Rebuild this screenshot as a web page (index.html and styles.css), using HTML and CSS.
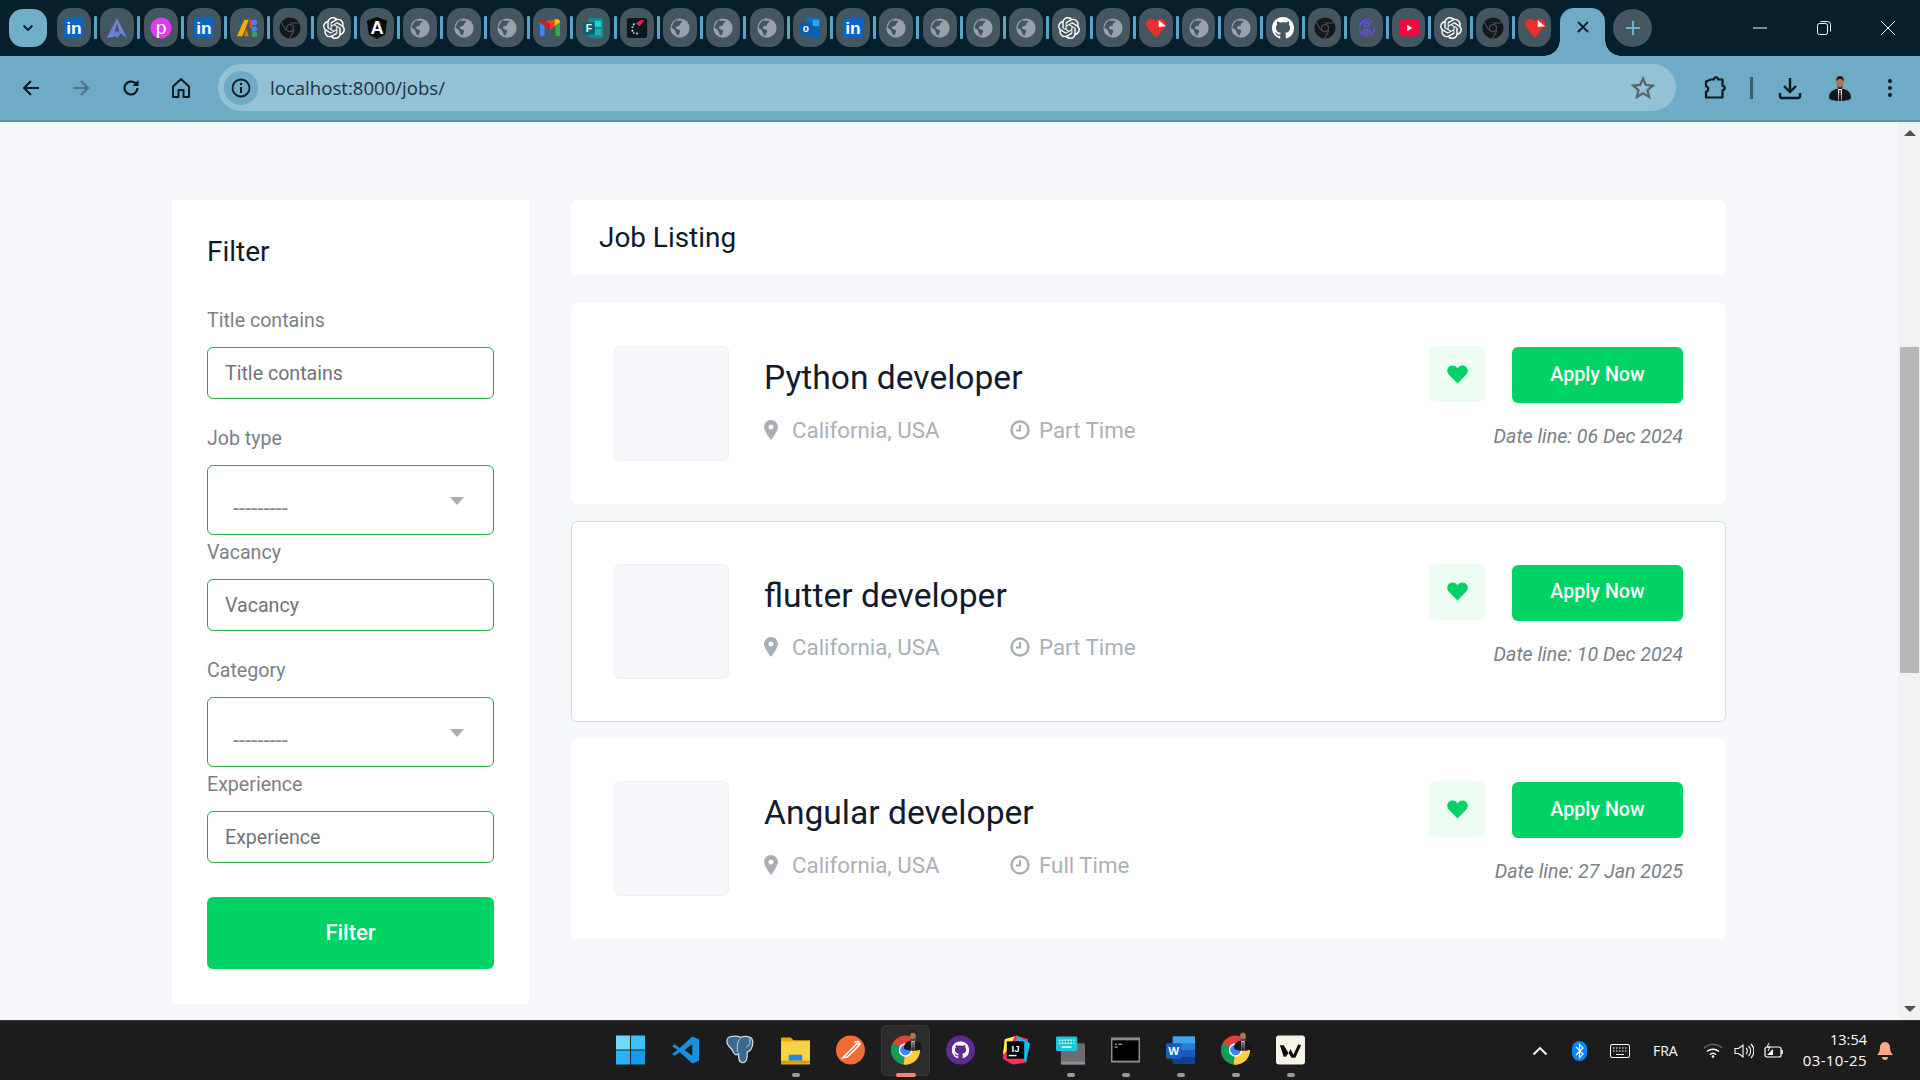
FILE: index.html
```html
<!DOCTYPE html>
<html lang="en">
<head>
<meta charset="utf-8">
<title>Job Listing</title>
<link rel="stylesheet" href="styles.css">
</head>
<body>
<svg class="defs" width="0" height="0" aria-hidden="true">
  <symbol id="g-globe" viewBox="0 0 24 24"><circle cx="12" cy="12" r="10.500" fill="#98a2a8"/><path d="M8 3.500c2 1 5 .5 7 .5-1 2-3 2.500-3 4.500 0 1.500-4 1-4.500 3-.3 1.500 2 2 3.500 2.500 1.500.5 1.500 2 .5 3.500-1 1.500-1 2.500-1 3-3-1-3-4-4-6-1-2-4-2-4-3C4 8 5 5 8 3.500z" fill="#44565f"/></symbol>
  <symbol id="g-arch" viewBox="0 0 24 24"><path d="M12 1 23 23l-7-5-4 5-1-2-10 2z" fill="#6f83d6"/><path d="M12 7l-3 11 3-3 3 3z" fill="#44565f"/></symbol>
  <symbol id="g-ads" viewBox="0 0 24 24"><path d="M9 3h5L7 21H1z" fill="#f9ab00"/><path d="M15 3h3v9h-3z" fill="#ea4335"/><circle cx="20" cy="6" r="3" fill="#4285f4"/><circle cx="20" cy="13" r="3" fill="#4285f4"/><circle cx="20" cy="19" r="3" fill="#34a853"/><path d="M11 12l3 9h-5z" fill="#e37400"/></symbol>
  <symbol id="g-chrome" viewBox="0 0 24 24"><circle cx="12" cy="12" r="11.500" fill="#14181b"/><circle cx="12" cy="12" r="4.500" fill="#44565f"/><circle cx="12" cy="12" r="3.200" fill="#14181b"/><path d="M12 6.500h10M16.500 14.500l-5 9M7.500 14.500 2.500 6" stroke="#44565f" stroke-width="1.200" fill="none"/></symbol>
  <symbol id="g-gpt" viewBox="0 0 24 24"><path fill="#fff" d="M22.2819 9.8211a5.9847 5.9847 0 0 0-.5157-4.9108 6.0462 6.0462 0 0 0-6.5098-2.9A6.0651 6.0651 0 0 0 4.9807 4.1818a5.9847 5.9847 0 0 0-3.9977 2.9 6.0462 6.0462 0 0 0 .7427 7.0966 5.98 5.98 0 0 0 .511 4.9107 6.051 6.051 0 0 0 6.5146 2.9001A5.9847 5.9847 0 0 0 13.2599 24a6.0557 6.0557 0 0 0 5.7718-4.2058 5.9894 5.9894 0 0 0 3.9977-2.9001 6.0557 6.0557 0 0 0-.7475-7.0729zm-9.022 12.6081a4.4755 4.4755 0 0 1-2.8764-1.0408l.1419-.0804 4.7783-2.7582a.7948.7948 0 0 0 .3927-.6813v-6.7369l2.02 1.1686a.071.071 0 0 1 .038.052v5.5826a4.504 4.504 0 0 1-4.4945 4.4944zm-9.6607-4.1254a4.4708 4.4708 0 0 1-.5346-3.0137l.142.0852 4.783 2.7582a.7712.7712 0 0 0 .7806 0l5.8428-3.3685v2.3324a.0804.0804 0 0 1-.0332.0615L9.74 19.9502a4.4992 4.4992 0 0 1-6.1408-1.6464zM2.3408 7.8956a4.485 4.485 0 0 1 2.3655-1.9728V11.6a.7664.7664 0 0 0 .3879.6765l5.8144 3.3543-2.0201 1.1685a.0757.0757 0 0 1-.071 0l-4.8303-2.7865A4.504 4.504 0 0 1 2.3408 7.872zm16.5963 3.8558L13.1038 8.364 15.1192 7.2a.0757.0757 0 0 1 .071 0l4.8303 2.7913a4.4944 4.4944 0 0 1-.6765 8.1042v-5.6772a.79.79 0 0 0-.407-.667zm2.0107-3.0231l-.142-.0852-4.7735-2.7818a.7759.7759 0 0 0-.7854 0L9.409 9.2297V6.8974a.0662.0662 0 0 1 .0284-.0615l4.8303-2.7866a4.4992 4.4992 0 0 1 6.6802 4.66zM8.3065 12.863l-2.02-1.1638a.0804.0804 0 0 1-.038-.0567V6.0742a4.4992 4.4992 0 0 1 7.3757-3.4537l-.142.0805L8.704 5.459a.7948.7948 0 0 0-.3927.6813zm1.0976-2.3654l2.602-1.4998 2.6069 1.4998v2.9994l-2.5974 1.4997-2.6067-1.4997Z"/></symbol>
  <symbol id="g-gmail" viewBox="0 0 24 24"><path d="M1 6v15h5V10z" fill="#4285f4"/><path d="M23 6v15h-5V10z" fill="#34a853"/><path d="M1 5 12 14l5-4V3z" fill="#ea4335"/><path d="M17 3v7l6-4c0-3-3-5-6-3z" fill="#fbbc04"/><path d="M1 5c0-3 3-3 5-2l6 5v6z" fill="#c5221f"/></symbol>
  <symbol id="g-speed" viewBox="0 0 24 24"><rect x="1" y="1" width="22" height="22" rx="3" fill="#0a1820"/><path d="M11 7c3-3 6-4 9-4l-5 7z" fill="#f0204d"/><path d="M9 7 8 9M6 11h2M6 15h2M8 18l1-1M12 19v-2" stroke="#fff" stroke-width="1.500"/></symbol>
  <symbol id="g-heart" viewBox="0 0 24 24"><path d="M12 23 2 11C-1 6 3 2 7 2c2 0 4 1 5 3 1-2 3-3 5-3 3 0 6 3 6 6 0 2-1 3-2 4z" fill="#e9302e"/><path d="M15 3.500 23 10l-8 1z" fill="#fff"/></symbol>
  <symbol id="g-gh" viewBox="0 0 16 16"><path fill="#fff" d="M8 0C3.580 0 0 3.580 0 8c0 3.540 2.290 6.530 5.470 7.590.4.07.55-.17.55-.38 0-.19-.01-.82-.01-1.490-2.010.37-2.530-.49-2.690-.94-.09-.23-.48-.94-.82-1.130-.28-.15-.68-.52-.01-.53.63-.01 1.080.58 1.230.82.72 1.210 1.870.87 2.330.66.07-.52.28-.87.51-1.070-1.780-.2-3.640-.89-3.640-3.950 0-.87.31-1.590.82-2.150-.08-.2-.36-1.020.08-2.120 0 0 .67-.21 2.200.82.64-.18 1.320-.27 2-.27.68 0 1.360.09 2 .27 1.530-1.040 2.200-.82 2.200-.82.44 1.100.16 1.920.08 2.120.51.56.82 1.270.82 2.150 0 3.070-1.870 3.750-3.650 3.950.29.25.54.73.54 1.480 0 1.070-.01 1.930-.01 2.200 0 .21.15.46.55.38A8.013 8.013 0 0016 8c0-4.420-3.580-8-8-8z"/></symbol>
  <symbol id="g-care" viewBox="0 0 24 24"><g fill="none" stroke="#6a4cf0" stroke-width="1.500"><circle cx="12" cy="8.500" r="2.500"/><path d="M9 21v-6c0-2 6-2 6 0v6M12 14v7M4 12a8 8 0 0 1 14-6M20 12a8 8 0 0 1-3 7M7 19a8 8 0 0 1-3-4"/></g></symbol>
  <symbol id="g-yt" viewBox="0 0 24 24"><rect x="1" y="3" width="22" height="18" rx="3" fill="#f5073f"/><path d="M10 8.500 15.500 12 10 15.500z" fill="#fff"/></symbol>

  <symbol id="t-win" viewBox="0 0 30 30"><rect x="0" y="0" width="14.500" height="14.500" fill="#70d9fb"/><rect x="15.500" y="0" width="14.500" height="14.500" fill="#3fc0f8"/><rect x="0" y="15.500" width="14.500" height="14.500" fill="#2cb2f4"/><rect x="15.500" y="15.500" width="14.500" height="14.500" fill="#149bee"/></symbol>
  <symbol id="t-code" viewBox="0 0 30 30"><path d="M22 1 29 4v22l-7 3L9 17l-5 4-3-2 6-4-6-4 3-2 5 4z" fill="#1a8fdc"/><path d="M22 9 14 15l8 6z" fill="#1c1c1c"/></symbol>
  <symbol id="t-pg" viewBox="0 0 30 30"><path d="M6 1c6-1 9 1 9 1s5-2 10 0c4 2 3 8 1 12-2 3-3 2-4 3 0 5 0 11-5 11-4 0-4-5-4-9-3 2-5 0-6-3-1-3-7-6-6-10C1 3 3 1 6 1z" fill="#3a6a93" stroke="#cfd9e2" stroke-width="1.300"/><path d="M15 3c-3 3-4 7-3 14M24 3c2 4 0 8-3 9" fill="none" stroke="#cfd9e2" stroke-width="1"/></symbol>
  <symbol id="t-folder" viewBox="0 0 30 30"><path d="M0 3a1 1 0 0 1 1-1h9l3 3h17v25H0z" fill="#e9a80f"/><rect y="6" width="30" height="23" fill="#fbd145"/><rect x="8" y="20" width="14" height="6" rx="1" fill="#1c8be0"/><rect y="26" width="30" height="3" fill="#d89a10"/></symbol>
  <symbol id="t-post" viewBox="0 0 30 30"><circle cx="15" cy="15" r="15" fill="#ef6c37"/><path d="M7 23 22 8l2 2-12 12zM19 7l4-1 2 3-2 2" fill="none" stroke="#fff" stroke-width="1.600"/></symbol>
  <symbol id="t-chrome" viewBox="0 0 30 30"><circle cx="15" cy="15" r="15" fill="#db4437"/><path d="M15 15 2 8a15 15 0 0 0 11 22z" fill="#0f9d58"/><path d="M15 15h15a15 15 0 0 1-17 15z" fill="#ffcd40"/><circle cx="15" cy="15" r="7" fill="#fff"/><circle cx="15" cy="15" r="5.500" fill="#4285f4"/></symbol>
  <symbol id="t-avatar" viewBox="0 0 22 26"><path d="M0 23c0-5 2-7 7-9h8c5 2 7 4 7 9 0 1-4 3-11 3S0 24 0 23z" fill="#15171a"/><path d="M9 14h4l-.5 12h-3z" fill="#ececec"/><path d="M10.400 15h1.200l.5 11h-2.200z" fill="#0d0d0d"/><ellipse cx="11" cy="8" rx="3.500" ry="5.500" fill="#a67653"/><path d="M7 7c-1-8 9-8 8 0-1-3-2-3-4-3S8 4 7 7z" fill="#251a13"/><path d="M8 10c1 3 5 3 6 0l-1 4H9z" fill="#3b2a1f"/></symbol>
  <symbol id="t-ghd" viewBox="0 0 30 30"><circle cx="15" cy="15" r="15" fill="#5f2b91"/><use href="#g-gh" x="6" y="6" width="18" height="18"/></symbol>
  <symbol id="t-kbd" viewBox="0 0 30 30"><rect x="5" y="8" width="25" height="22" rx="1.500" fill="#6a6e72"/><rect x="5" y="27" width="25" height="3" fill="#8c9094"/><rect x="0" y="1" width="22" height="15" rx="1.500" fill="#1ec6d8"/><path d="M3 5h16M3 8h16" stroke="#fff" stroke-width="1.500" stroke-dasharray="1.500 1.500"/><path d="M6 12h10" stroke="#fff" stroke-width="1.500"/></symbol>
  <symbol id="t-term" viewBox="0 0 30 30"><rect x="0" y="2" width="30" height="26" fill="#8d8d8d"/><rect x="1.500" y="5" width="27" height="21" fill="#000"/><path d="M4 9h2M7.500 9h4M4 12h3" stroke="#ddd" stroke-width="1"/></symbol>
  <symbol id="t-w" viewBox="0 0 30 30"><rect width="30" height="30" rx="3" fill="#f8f3e8"/><path d="M4 10h4l5 8 2-4 3 6 5-11 3 1-6 13h-4l-3-5-3 4h-2z" fill="#0b0b0b"/></symbol>
</svg>

<div class="screen">
  <header class="tabstrip">
    <button class="tab-search"><svg width="12" height="8" viewBox="0 0 12 8"><path d="M1.500 1.500 6 6l4.500-4.500" fill="none" stroke="#0b1f2b" stroke-width="1.800"/></svg></button>
    <div class="tabs">
      <span class="tab"><svg class="fav" viewBox="0 0 24 24"><rect x="1" y="1" width="22" height="22" rx="2" fill="#0a66c2"/><text x="12" y="19" text-anchor="middle" class="svgt fs19 fb">in</text></svg></span><i class="sep"></i>
      <span class="tab"><svg class="fav"><use href="#g-arch"/></svg></span><i class="sep"></i>
      <span class="tab"><svg class="fav" viewBox="0 0 24 24"><circle cx="12" cy="12" r="11.500" fill="#dd3cf0"/><text x="12" y="18" text-anchor="middle" class="svgt fs21">p</text></svg></span><i class="sep"></i>
      <span class="tab"><svg class="fav" viewBox="0 0 24 24"><rect x="1" y="1" width="22" height="22" rx="2" fill="#0a66c2"/><text x="12" y="19" text-anchor="middle" class="svgt fs19 fb">in</text></svg></span><i class="sep"></i>
      <span class="tab"><svg class="fav"><use href="#g-ads"/></svg></span><i class="sep"></i>
      <span class="tab"><svg class="fav"><use href="#g-chrome"/></svg></span><i class="sep"></i>
      <span class="tab"><svg class="fav"><use href="#g-gpt"/></svg></span><i class="sep"></i>
      <span class="tab"><svg class="fav" viewBox="0 0 24 24"><path d="M12 0 23 4l-2 15-9 5-9-5L1 4z" fill="#0c0c0c"/><text x="12" y="18.500" text-anchor="middle" class="svgt fs20 fb">A</text></svg></span><i class="sep"></i>
      <span class="tab"><svg class="fav"><use href="#g-globe"/></svg></span><i class="sep"></i>
      <span class="tab"><svg class="fav"><use href="#g-globe"/></svg></span><i class="sep"></i>
      <span class="tab"><svg class="fav"><use href="#g-globe"/></svg></span><i class="sep"></i>
      <span class="tab"><svg class="fav"><use href="#g-gmail"/></svg></span><i class="sep"></i>
      <span class="tab"><svg class="fav" viewBox="0 0 24 24"><rect x="7" y="1" width="16" height="22" rx="1.500" fill="#0f8b8d"/><rect x="14" y="4" width="7" height="7" fill="#37c6d0"/><rect x="14" y="13" width="7" height="7" fill="#30a6ae"/><rect x="1" y="6" width="13" height="13" rx="1.500" fill="#04656a"/><text x="7.500" y="16.500" text-anchor="middle" class="svgt fs11 fb">F</text></svg></span><i class="sep"></i>
      <span class="tab"><svg class="fav"><use href="#g-speed"/></svg></span><i class="sep"></i>
      <span class="tab"><svg class="fav"><use href="#g-globe"/></svg></span><i class="sep"></i>
      <span class="tab"><svg class="fav"><use href="#g-globe"/></svg></span><i class="sep"></i>
      <span class="tab"><svg class="fav"><use href="#g-globe"/></svg></span><i class="sep"></i>
      <span class="tab"><svg class="fav" viewBox="0 0 24 24"><rect x="8" y="1" width="15" height="22" rx="1.500" fill="#0f6cbd"/><rect x="15" y="3" width="7" height="7" fill="#28a8ea"/><rect x="8" y="10" width="15" height="13" fill="#0364b8"/><rect x="1" y="6" width="13" height="13" rx="1.500" fill="#0b5cad"/><text x="7.500" y="16.500" text-anchor="middle" class="svgt fs11 fb">o</text></svg></span><i class="sep"></i>
      <span class="tab"><svg class="fav" viewBox="0 0 24 24"><rect x="1" y="1" width="22" height="22" rx="2" fill="#0a66c2"/><text x="12" y="19" text-anchor="middle" class="svgt fs19 fb">in</text></svg></span><i class="sep"></i>
      <span class="tab"><svg class="fav"><use href="#g-globe"/></svg></span><i class="sep"></i>
      <span class="tab"><svg class="fav"><use href="#g-globe"/></svg></span><i class="sep"></i>
      <span class="tab"><svg class="fav"><use href="#g-globe"/></svg></span><i class="sep"></i>
      <span class="tab"><svg class="fav"><use href="#g-globe"/></svg></span><i class="sep"></i>
      <span class="tab"><svg class="fav"><use href="#g-gpt"/></svg></span><i class="sep"></i>
      <span class="tab"><svg class="fav"><use href="#g-globe"/></svg></span><i class="sep"></i>
      <span class="tab"><svg class="fav"><use href="#g-heart"/></svg></span><i class="sep"></i>
      <span class="tab tab-slim"><svg class="fav"><use href="#g-globe"/></svg></span><i class="sep sep-slim"></i>
      <span class="tab tab-slim"><svg class="fav"><use href="#g-globe"/></svg></span><i class="sep sep-slim"></i>
      <span class="tab tab-slim"><svg class="fav"><use href="#g-gh"/></svg></span><i class="sep sep-slim"></i>
      <span class="tab tab-slim"><svg class="fav"><use href="#g-chrome"/></svg></span><i class="sep sep-slim"></i>
      <span class="tab tab-slim"><svg class="fav"><use href="#g-care"/></svg></span><i class="sep sep-slim"></i>
      <span class="tab tab-slim"><svg class="fav"><use href="#g-yt"/></svg></span><i class="sep sep-slim"></i>
      <span class="tab tab-slim"><svg class="fav"><use href="#g-gpt"/></svg></span><i class="sep sep-slim"></i>
      <span class="tab tab-slim"><svg class="fav"><use href="#g-chrome"/></svg></span><i class="sep sep-slim"></i>
      <span class="tab tab-slim"><svg class="fav"><use href="#g-heart"/></svg></span>
    </div>
    <div class="tab-active"><svg width="14" height="14" viewBox="0 0 14 14"><path d="M2 2l10 10M12 2 2 12" stroke="#0b1f2b" stroke-width="1.800"/></svg></div>
    <div class="tab-new"><svg width="16" height="16" viewBox="0 0 16 16"><path d="M8 1v14M1 8h14" stroke="#6db1d0" stroke-width="2"/></svg></div>
    <div class="win-controls">
      <span class="win-btn"><svg width="16" height="16" viewBox="0 0 16 16"><path d="M1 8h14" stroke="#fff" stroke-width="1"/></svg></span>
      <span class="win-btn"><svg width="16" height="16" viewBox="0 0 16 16"><rect x="1.500" y="3.500" width="10" height="11" rx="2" fill="none" stroke="#fff"/><path d="M4.500 1.500h7a3 3 0 0 1 3 3v7" fill="none" stroke="#fff"/></svg></span>
      <span class="win-btn"><svg width="16" height="16" viewBox="0 0 16 16"><path d="M1 1l14 14M15 1 1 15" stroke="#fff" stroke-width="1"/></svg></span>
    </div>
  </header>

  <nav class="toolbar">
    <span class="nav-btn"><svg width="18" height="18" viewBox="0 0 18 18"><path d="M17 9H2M9 2 2 9l7 7" fill="none" stroke="#0e1a20" stroke-width="2"/></svg></span>
    <span class="nav-btn"><svg width="18" height="18" viewBox="0 0 18 18"><path d="M1 9h15M9 2l7 7-7 7" fill="none" stroke="#4f7486" stroke-width="2"/></svg></span>
    <span class="nav-btn"><svg width="20" height="20" viewBox="0 0 20 20"><path d="M16.500 10a6.500 6.500 0 1 1-2-4.700" fill="none" stroke="#0e1a20" stroke-width="2.200"/><path d="M17.500 2v6h-6z" fill="#0e1a20"/></svg></span>
    <span class="nav-btn"><svg width="20" height="22" viewBox="0 0 20 22"><path d="M2 9.500 10 2l8 7.500V20h-5.500v-7h-5v7H2z" fill="none" stroke="#0e1a20" stroke-width="2" stroke-linejoin="round"/></svg></span>
    <div class="omnibox">
      <span class="site-info"><svg width="20" height="20" viewBox="0 0 20 20"><circle cx="10" cy="10" r="8.500" fill="none" stroke="#0e1a20" stroke-width="1.800"/><path d="M10 9v6" stroke="#0e1a20" stroke-width="2"/><circle cx="10" cy="6" r="1.200" fill="#0e1a20"/></svg></span>
      <span class="url">localhost:8000/jobs/</span>
      <svg class="star" width="24" height="24" viewBox="0 0 24 24"><path d="m12 2.500 2.800 6.400 7 .7-5.300 4.600 1.600 6.800-6.100-3.600L5.900 21l1.600-6.800L2.200 9.600l7-.7z" fill="none" stroke="#5b6268" stroke-width="2.200"/></svg>
    </div>
    <div class="tools">
      <svg class="tool-puzzle" width="24" height="24" viewBox="0 0 24 24"><path d="M9 3.500h3c0-3 4-3 4 0h4.500V10c3 0 3 4 0 4v7.500H4v-6c3 0 3-5 0-5V5.500z" fill="none" stroke="#0e1a20" stroke-width="2.200" stroke-linejoin="round"/></svg>
      <i class="tool-sep"></i>
      <svg class="tool-dl" width="24" height="24" viewBox="0 0 24 24"><path d="M12 2v13M6 10l6 6 6-6" fill="none" stroke="#0e1a20" stroke-width="2.400"/><path d="M2 17v3a2 2 0 0 0 2 2h16a2 2 0 0 0 2-2v-3" fill="none" stroke="#0e1a20" stroke-width="2.400"/></svg>
      <svg class="tool-avatar" width="22" height="26"><use href="#t-avatar"/></svg>
      <svg class="tool-menu" width="6" height="20" viewBox="0 0 6 20"><circle cx="3" cy="3" r="2" fill="#0e1a20"/><circle cx="3" cy="10" r="2" fill="#0e1a20"/><circle cx="3" cy="17" r="2" fill="#0e1a20"/></svg>
    </div>
  </nav>

  <div class="viewport">
    <main class="page">
      <aside class="filter">
        <h3 class="filter-title">Filter</h3>
        <label class="field-label">Title contains</label>
        <input class="field-input" placeholder="Title contains">
        <label class="field-label">Job type</label>
        <div class="field-select"><span class="select-value">---------</span></div>
        <label class="field-label">Vacancy</label>
        <input class="field-input" placeholder="Vacancy">
        <label class="field-label">Category</label>
        <div class="field-select"><span class="select-value">---------</span></div>
        <label class="field-label">Experience</label>
        <input class="field-input" placeholder="Experience">
        <button class="filter-btn">Filter</button>
      </aside>
      <section class="listing">
        <div class="listing-head">Job Listing</div>
        <article class="job">
          <div class="job-logo"></div>
          <div class="job-info">
            <h4 class="job-title">Python developer</h4>
            <div class="job-meta">
              <span class="meta-item meta-loc"><svg class="meta-pin" width="14" height="20" viewBox="0 0 14 20"><path d="M7 0a7 7 0 0 0-7 7c0 4 7 13 7 13s7-9 7-13a7 7 0 0 0-7-7zm0 9.500A2.500 2.500 0 1 1 7 4.500a2.500 2.500 0 0 1 0 5z" fill="#a8aeb5"/></svg>California, USA</span>
              <span class="meta-item"><svg class="meta-clock" width="20" height="20" viewBox="0 0 20 20"><circle cx="10" cy="10" r="8.500" fill="none" stroke="#a8aeb5" stroke-width="2.400"/><path d="M10 5v5.500H6" fill="none" stroke="#a8aeb5" stroke-width="2"/></svg>Part Time</span>
            </div>
          </div>
          <div class="job-actions">
            <div class="job-buttons">
              <span class="fav-btn"><svg width="21" height="19" viewBox="0 0 21 19"><path d="M10.500 18.500 1.800 9.600C-1.500 6 .8 .5 5.500 .5c2.300 0 4 1.200 5 3 1-1.800 2.700-3 5-3 4.700 0 7 5.500 3.700 9.100z" fill="#00d363"/></svg></span>
              <button class="apply-btn">Apply Now</button>
            </div>
            <p class="job-date">Date line: 06 Dec 2024</p>
          </div>
        </article>
        <article class="job job-hover">
          <div class="job-logo"></div>
          <div class="job-info">
            <h4 class="job-title">flutter developer</h4>
            <div class="job-meta">
              <span class="meta-item meta-loc"><svg class="meta-pin" width="14" height="20" viewBox="0 0 14 20"><path d="M7 0a7 7 0 0 0-7 7c0 4 7 13 7 13s7-9 7-13a7 7 0 0 0-7-7zm0 9.500A2.500 2.500 0 1 1 7 4.500a2.500 2.500 0 0 1 0 5z" fill="#a8aeb5"/></svg>California, USA</span>
              <span class="meta-item"><svg class="meta-clock" width="20" height="20" viewBox="0 0 20 20"><circle cx="10" cy="10" r="8.500" fill="none" stroke="#a8aeb5" stroke-width="2.400"/><path d="M10 5v5.500H6" fill="none" stroke="#a8aeb5" stroke-width="2"/></svg>Part Time</span>
            </div>
          </div>
          <div class="job-actions">
            <div class="job-buttons">
              <span class="fav-btn"><svg width="21" height="19" viewBox="0 0 21 19"><path d="M10.500 18.500 1.800 9.600C-1.500 6 .8 .5 5.500 .5c2.300 0 4 1.200 5 3 1-1.800 2.700-3 5-3 4.700 0 7 5.500 3.700 9.100z" fill="#00d363"/></svg></span>
              <button class="apply-btn">Apply Now</button>
            </div>
            <p class="job-date">Date line: 10 Dec 2024</p>
          </div>
        </article>
        <article class="job">
          <div class="job-logo"></div>
          <div class="job-info">
            <h4 class="job-title">Angular developer</h4>
            <div class="job-meta">
              <span class="meta-item meta-loc"><svg class="meta-pin" width="14" height="20" viewBox="0 0 14 20"><path d="M7 0a7 7 0 0 0-7 7c0 4 7 13 7 13s7-9 7-13a7 7 0 0 0-7-7zm0 9.500A2.500 2.500 0 1 1 7 4.500a2.500 2.500 0 0 1 0 5z" fill="#a8aeb5"/></svg>California, USA</span>
              <span class="meta-item"><svg class="meta-clock" width="20" height="20" viewBox="0 0 20 20"><circle cx="10" cy="10" r="8.500" fill="none" stroke="#a8aeb5" stroke-width="2.400"/><path d="M10 5v5.500H6" fill="none" stroke="#a8aeb5" stroke-width="2"/></svg>Full Time</span>
            </div>
          </div>
          <div class="job-actions">
            <div class="job-buttons">
              <span class="fav-btn"><svg width="21" height="19" viewBox="0 0 21 19"><path d="M10.500 18.500 1.800 9.600C-1.500 6 .8 .5 5.500 .5c2.300 0 4 1.200 5 3 1-1.800 2.700-3 5-3 4.700 0 7 5.500 3.700 9.100z" fill="#00d363"/></svg></span>
              <button class="apply-btn">Apply Now</button>
            </div>
            <p class="job-date">Date line: 27 Jan 2025</p>
          </div>
        </article>
      </section>
    </main>
    <div class="scrollbar">
      <span class="sb-arrow sb-up"></span>
      <div class="sb-track"><div class="sb-thumb"></div></div>
      <span class="sb-arrow sb-down"></span>
    </div>
  </div>

  <footer class="taskbar">
    <div class="task-icons">
      <span class="task"><svg class="task-ic"><use href="#t-win"/></svg></span>
      <span class="task"><svg class="task-ic"><use href="#t-code"/></svg></span>
      <span class="task"><svg class="task-ic"><use href="#t-pg"/></svg></span>
      <span class="task is-open"><svg class="task-ic"><use href="#t-folder"/></svg></span>
      <span class="task"><svg class="task-ic"><use href="#t-post"/></svg></span>
      <span class="task is-active"><svg class="task-ic"><use href="#t-chrome"/></svg><svg class="task-badge"><use href="#t-avatar"/></svg></span>
      <span class="task"><svg class="task-ic"><use href="#t-ghd"/></svg></span>
      <span class="task"><svg class="task-ic" viewBox="0 0 30 30"><path d="M4 4 16 0l12 4-2 24-14 2-10-6z" fill="#fe315d"/><path d="M16 0l14 8-4 20-8-10z" fill="#07c3f2"/><path d="M4 4 14 1 8 14 2 20z" fill="#fcf84a"/><rect x="6" y="6" width="18" height="18" fill="#000"/><text x="15" y="17" text-anchor="middle" class="svgt fs10 fb">IJ</text><rect x="8" y="20" width="8" height="1.500" fill="#fff"/></svg></span>
      <span class="task is-open"><svg class="task-ic"><use href="#t-kbd"/></svg></span>
      <span class="task is-open"><svg class="task-ic"><use href="#t-term"/></svg></span>
      <span class="task is-open"><svg class="task-ic" viewBox="0 0 30 30"><rect x="7" y="1" width="23" height="28" rx="1.500" fill="#2b7cd3"/><rect x="7" y="1" width="23" height="7" fill="#41a5ee"/><rect x="7" y="15" width="23" height="7" fill="#185abd"/><rect x="7" y="22" width="23" height="7" fill="#103f91"/><rect x="0" y="8" width="16" height="16" rx="1.500" fill="#1a5dbd"/><text x="8" y="20.500" text-anchor="middle" class="svgt fs12 fb">W</text></svg></span>
      <span class="task is-open"><svg class="task-ic"><use href="#t-chrome"/></svg><svg class="task-badge"><use href="#t-avatar"/></svg></span>
      <span class="task is-open"><svg class="task-ic"><use href="#t-w"/></svg></span>
    </div>
    <div class="tray">
      <svg class="tray-chev" width="16" height="10" viewBox="0 0 16 10"><path d="M1.500 8.500 8 2l6.500 6.500" fill="none" stroke="#fff" stroke-width="1.800"/></svg>
      <svg class="tray-bt" width="15" height="20" viewBox="0 0 15 20"><rect width="15" height="20" rx="7.500" fill="#0a84ff"/><path d="m4 6 7 7-3.500 3.500v-13L11 7l-7 7" fill="none" stroke="#fff" stroke-width="1.200"/></svg>
      <svg class="tray-kb" width="20" height="14" viewBox="0 0 20 14"><rect x=".5" y=".5" width="19" height="13" rx="1.500" fill="none" stroke="#fff"/><path d="M3 4h14M3 7h14" stroke="#fff" stroke-dasharray="1.500 1.500"/><path d="M6 10.500h8" stroke="#fff"/></svg>
      <span class="tray-lang">FRA</span>
      <svg class="tray-wifi" width="20" height="15" viewBox="0 0 20 15"><path d="M1 5a13 13 0 0 1 18 0" fill="none" stroke="#6b6b6b" stroke-width="1.400"/><path d="M4 8.500a9 9 0 0 1 12 0M7 11.500a4.500 4.500 0 0 1 6 0" fill="none" stroke="#fff" stroke-width="1.400"/><circle cx="10" cy="13.500" r="1.300" fill="#fff"/></svg>
      <svg class="tray-vol" width="20" height="16" viewBox="0 0 20 16"><path d="M1 5.500h3.500L9 2v12l-4.500-3.500H1z" fill="none" stroke="#fff" stroke-width="1.100"/><path d="M12 5a4 4 0 0 1 0 6M14.500 3a7 7 0 0 1 0 10M17 1a10 10 0 0 1 0 14" fill="none" stroke="#fff" stroke-width="1.100"/></svg>
      <svg class="tray-bat" width="20" height="16" viewBox="0 0 20 16"><rect x="1" y="4" width="16" height="10" rx="2" fill="none" stroke="#fff" stroke-width="1.200"/><path d="M18 7v4" stroke="#fff" stroke-width="1.600"/><path d="M3 12 9 6v6z" fill="#fff"/><path d="M5 0 3 4h3L4 8" fill="none" stroke="#fff"/></svg>
      <div class="tray-clock"><span class="clock-time">13:54</span><span class="clock-date">03-10-25</span></div>
      <svg class="tray-bell" width="16" height="20" viewBox="0 0 16 20"><path d="M8 1a5 5 0 0 1 5 5c0 4 1 6 3 8H0c2-2 3-4 3-8a5 5 0 0 1 5-5z" fill="#f9a986"/><path d="M5 16h6a3 3 0 0 1-6 0z" fill="#f9a986"/></svg>
    </div>
  </footer>
</div>
</body>
</html>
```

FILE: styles.css
```css
* { box-sizing: border-box; }
html, body { margin: 0; padding: 0; height: 100%; overflow: hidden; }
body { font-family: Roboto, "Liberation Sans", sans-serif; background: #f5f7fb; }
.defs { position: absolute; }
.svgt { font-family: "Liberation Sans", Arial, sans-serif; fill: #fff; }
.fs10 { font-size: 10px; }
.fs11 { font-size: 11px; }
.fs12 { font-size: 12px; }
.fs19 { font-size: 19px; }
.fs20 { font-size: 20px; }
.fs21 { font-size: 21px; }
.fb { font-weight: 700; }
.screen { display: flex; flex-direction: column; height: 1080px; width: 1920px; }

/* tab strip */
.tabstrip { height: 56px; flex: none; background: #071e2b; display: flex; align-items: flex-start; }
.tab-search { width: 38px; height: 38px; margin: 9px 10px 0 9px; border: 0; padding: 0; border-radius: 14px; background: #6fafca; display: flex; align-items: center; justify-content: center; }
.tabs { display: flex; align-items: center; height: 39px; margin-top: 8px; }
.tab { width: 34px; height: 39px; flex: none; border-radius: 14px; background: #44565f; display: flex; align-items: center; justify-content: center; }
.tab-slim { width: 33px; }
.fav { width: 22px; height: 24px; display: block; }
.sep { width: 3px; height: 23px; margin: 0 3.155px; flex: none; background: #5ba6c8; border-radius: 1px; }
.sep-slim { margin: 0 3px; }
.tab-active { position: relative; width: 45px; height: 48px; margin: 8px 0 0 8.900px; flex: none; background: #6eabc7; border-radius: 14px 14px 0 0; display: flex; align-items: center; justify-content: center; padding-bottom: 10px; }
.tab-active::before, .tab-active::after { content: ""; position: absolute; bottom: 0; width: 16px; height: 16px; }
.tab-active::before { left: -16px; background: radial-gradient(circle at 0 0, transparent 15.500px, #6eabc7 16px); }
.tab-active::after { right: -16px; background: radial-gradient(circle at 100% 0, transparent 15.500px, #6eabc7 16px); }
.tab-new { width: 39px; height: 38px; margin: 9px 0 0 8px; flex: none; border-radius: 50%; background: #44565f; display: flex; align-items: center; justify-content: center; }
.win-controls { display: flex; margin-left: auto; height: 56px; }
.win-btn { width: 64px; display: flex; align-items: center; justify-content: center; }

/* toolbar */
.toolbar { height: 66px; flex: none; background: #6eabc7; border-bottom: 2px solid #5b90a9; display: flex; align-items: flex-start; padding: 8px 0 0 6px; }
.nav-btn { width: 50px; height: 47px; flex: none; display: flex; align-items: center; justify-content: center; }
.omnibox { width: 1458px; height: 47px; margin-left: 12px; flex: none; border-radius: 24px; background: #93c2d7; display: flex; align-items: center; padding-left: 6px; }
.site-info { width: 34px; height: 34px; border-radius: 50%; background: #6eabc7; display: flex; align-items: center; justify-content: center; flex: none; }
.url { margin-left: 12px; font-family: "Open Sans", sans-serif; font-size: 18.600px; color: #20323b; }
.star { margin-left: auto; margin-right: 21px; }
.tools { display: flex; align-items: center; height: 47px; flex: 1; }
.tool-puzzle { margin-left: 26px; }
.tool-sep { width: 2.500px; height: 22px; margin-left: 24px; background: #3f5a68; }
.tool-dl { margin-left: 25px; }
.tool-avatar { margin-left: 27px; }
.tool-menu { margin-left: 36px; }

/* viewport */
.viewport { flex: 1; min-height: 0; display: flex; }
.page { flex: 1; min-width: 0; display: flex; align-items: flex-start; gap: 42px; padding: 78px 0 0 172px; background: #f5f7fb; }
.scrollbar { width: 22px; flex: none; background: #f1f1f1; display: flex; flex-direction: column; }
.sb-arrow { height: 22px; flex: none; display: flex; align-items: center; justify-content: center; padding-left: 1px; }
.sb-arrow::before { content: ""; border-left: 6px solid transparent; border-right: 6px solid transparent; }
.sb-up::before { border-bottom: 6px solid #505050; }
.sb-down::before { border-top: 6px solid #505050; }
.sb-track { flex: 1; padding: 203px 1px 0 2px; }
.sb-thumb { height: 326px; background: #b7b7b7; }

/* filter */
.filter { width: 357px; flex: none; background: #fff; padding: 34px 35px 35px; display: flex; flex-direction: column; }
.filter-title { margin: 0 0 39px; height: 34px; line-height: 35px; font-size: 28px; font-weight: 400; color: #0e1a2b; }
.field-label { height: 28px; line-height: 28px; margin-bottom: 12px; font-size: 19.600px; color: #7b7f87; }
.field-input { width: 287px; height: 52px; margin: 0 0 26px; padding: 0 17px; border: 1.500px solid #28a745; border-radius: 6px; outline: 0; background: #fff; font-family: Roboto, sans-serif; font-size: 19.600px; color: #6f737b; display: block; }
.field-input::placeholder { color: #6f737b; opacity: 1; }
.field-select { position: relative; width: 287px; height: 70px; margin-bottom: 4px; border: 1.500px solid #28a745; border-radius: 6px; padding: 26px 0 0 25px; font-size: 22px; line-height: 34px; color: #7f838b; }
.field-select::after { content: ""; position: absolute; right: 29px; top: 31px; border-left: 7px solid transparent; border-right: 7px solid transparent; border-top: 8px solid #a9adb5; }
.filter-btn { width: 287px; height: 72px; margin-top: 8px; padding: 0 0 2px; border: 0; border-radius: 6px; background: #00d363; color: #fff; font-family: Roboto, sans-serif; font-size: 22px; font-weight: 500; }

/* listing */
.listing { width: 1155px; flex: none; display: flex; flex-direction: column; }
.listing-head { height: 75px; line-height: 76px; margin-bottom: 28px; padding-left: 28px; background: #fff; border-radius: 6px; font-size: 27.900px; color: #0e1a2b; }
.job { height: 201px; margin-bottom: 16.500px; padding: 42px; background: #fff; border: 1px solid transparent; border-radius: 6px; display: flex; align-items: flex-start; }
.job-hover { border-color: #b4efcf; }
.job-logo { width: 115px; height: 115px; flex: none; background: #f5f7fb; border: 1px solid #eef0f4; border-radius: 6px; margin-right: 35px; }
.job-info { flex: 1; min-width: 0; padding-top: 9px; }
.job-title { margin: 0; font-size: 33.600px; line-height: 46px; font-weight: 400; color: #131a2d; }
.job-meta { display: flex; align-items: center; margin-top: 13.500px; font-size: 22.300px; line-height: 30px; color: #aab0b8; }
.meta-item { display: inline-flex; align-items: center; }
.meta-loc { width: 246px; }
.meta-pin { margin-right: 14px; }
.meta-clock { margin-right: 9px; }
.job-actions { flex: none; width: 254px; display: flex; flex-direction: column; align-items: flex-end; }
.job-buttons { display: flex; align-items: flex-start; gap: 27px; }
.fav-btn { width: 56px; height: 56px; border-radius: 6px; background: #edfcf3; display: flex; align-items: center; justify-content: center; }
.apply-btn { width: 171px; height: 56px; margin-top: 1px; padding: 0 0 2px; border: 0; border-radius: 6px; background: #00d363; color: #fff; font-family: Roboto, sans-serif; font-size: 19.700px; font-weight: 500; }
.job-date { margin: 20px 0 0; font-size: 19.600px; line-height: 28px; font-style: italic; color: #7b7f87; }

/* taskbar */
.taskbar { height: 60px; flex: none; background: #1c1c1c; border-top: 1px solid #3a3a3a; display: flex; align-items: center; padding-left: 603px; }
.task-icons { display: flex; align-items: center; }
.task { position: relative; width: 55px; height: 59px; display: flex; align-items: center; justify-content: center; }
.task-ic { width: 29px; height: 30px; margin-top: -1px; }
.task-badge { position: absolute; width: 18px; height: 24px; left: 26px; top: 7px; }
.is-open::after, .is-active::after { content: ""; position: absolute; bottom: 3px; left: 50%; height: 4px; width: 8px; margin-left: -4px; border-radius: 2px; background: #9a9a9a; }
.is-active::before { content: ""; position: absolute; left: 3px; right: 3px; top: 4px; bottom: 4px; background: #2c2c2c; border: 1px solid #383838; border-radius: 5px; z-index: 0; }
.is-active > svg { z-index: 1; }
.is-active::after { width: 20px; margin-left: -10px; background: #f7876e; z-index: 1; }
.tray { margin-left: auto; display: flex; align-items: center; height: 59px; color: #fff; padding-right: 27px; }
.tray-bt { margin-left: 24px; }
.tray-kb { margin-left: 23px; }
.tray-lang { margin-left: 23.500px; width: 30px; font-size: 14px; font-family: "Open Sans", sans-serif; }
.tray-wifi { margin-left: 20px; }
.tray-vol { margin-left: 11px; }
.tray-bat { margin-left: 10px; }
.tray-clock { margin-left: 13px; width: 70px; padding-bottom: 2px; display: flex; flex-direction: column; align-items: flex-end; font-family: "Open Sans", sans-serif; line-height: 20px; }
.clock-time { font-size: 14.500px; }
.clock-date { font-size: 15px; letter-spacing: .4px; }
.tray-bell { margin-left: 10px; }
```
